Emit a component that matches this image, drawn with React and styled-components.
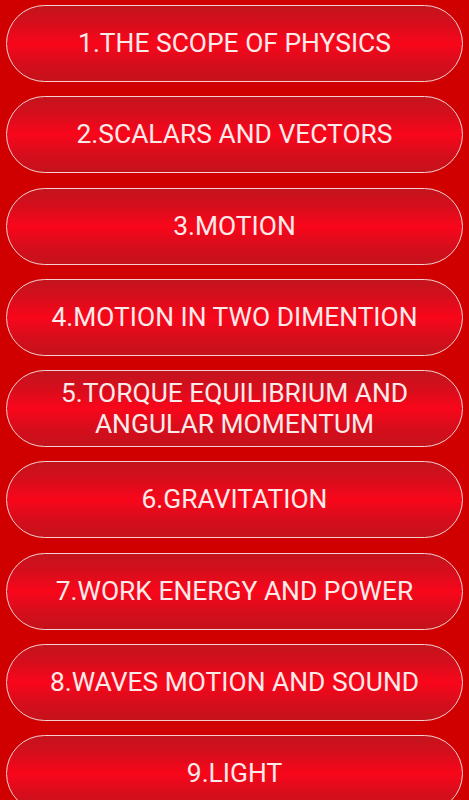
import styled, { createGlobalStyle } from "styled-components";

const chapters = [
  "1.THE SCOPE OF PHYSICS",
  "2.SCALARS AND VECTORS",
  "3.MOTION",
  "4.MOTION IN TWO DIMENTION",
  "5.TORQUE EQUILIBRIUM AND ANGULAR MOMENTUM",
  "6.GRAVITATION",
  "7.WORK ENERGY AND POWER",
  "8.WAVES MOTION AND SOUND",
  "9.LIGHT",
];

const GlobalStyle = createGlobalStyle`
  html, body {
    margin: 0;
    padding: 0;
    background: #d00000;
    overflow: hidden;
  }
  body {
    font-family: Roboto, "Liberation Sans", sans-serif;
  }
`;

export default function App() {
  return (
    <>
      <GlobalStyle />
      <Container>
        {chapters.map((title) => (
          <ChapterButton key={title}>{title}</ChapterButton>
        ))}
      </Container>
    </>
  );
}

const Container = styled.div`
  height: 800px;
  background: #d00000;
  padding: 5px 6px 0 6px;
  box-sizing: border-box;
  display: flex;
  flex-direction: column;
  gap: 14.3px;
`;

const ChapterButton = styled.button`
  flex: 0 0 77px;
  height: 77px;
  width: 100%;
  box-sizing: border-box;
  border: 1.5px solid #f6d0d0;
  border-radius: 39px;
  background: linear-gradient(
    to bottom,
    #c3141d 0%,
    #d80d1c 25%,
    #f9061a 50%,
    #d80d1c 75%,
    #c4121b 100%
  );
  color: #fbeaea;
  font-family: Roboto, "Liberation Sans", sans-serif;
  font-size: 26.4px;
  line-height: 31px;
  text-align: center;
  padding: 0 36px;
  display: flex;
  align-items: center;
  justify-content: center;
  cursor: pointer;
`;
